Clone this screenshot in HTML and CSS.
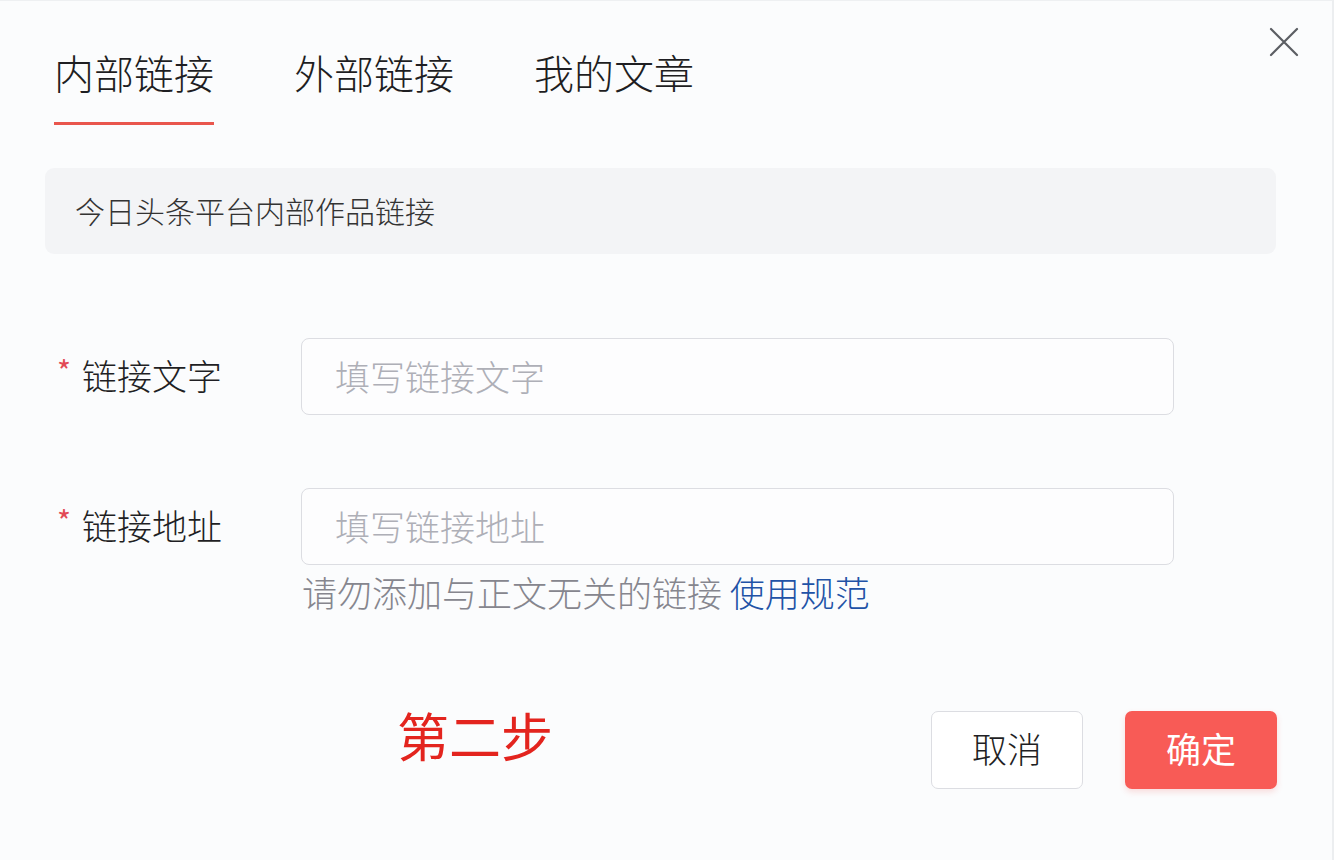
FILE: index.html
```html
<!DOCTYPE html>
<html lang="zh-CN">
<head>
<meta charset="utf-8">
<title>插入链接</title>
<link rel="stylesheet" href="styles.css">
</head>
<body>
<div class="dialog">
  <button class="close" aria-label="关闭">
    <svg width="30" height="30" viewBox="0 0 30 30"><path d="M2 2 L28 28 M28 2 L2 28" stroke="#5b5e63" stroke-width="2.2" stroke-linecap="round" fill="none"/></svg>
  </button>
  <div class="tabs">
    <div class="tab active">内部链接</div>
    <div class="tab">外部链接</div>
    <div class="tab">我的文章</div>
  </div>
  <div class="notice">今日头条平台内部作品链接</div>
  <div class="form">
    <div class="row">
      <label class="label"><span class="req">*</span>链接文字</label>
      <input class="input" type="text" placeholder="填写链接文字">
    </div>
    <div class="row row-2">
      <label class="label"><span class="req">*</span>链接地址</label>
      <input class="input" type="text" placeholder="填写链接地址">
    </div>
    <div class="help">请勿添加与正文无关的链接 <a class="link" href="#">使用规范</a></div>
  </div>
  <div class="footer">
    <div class="step">第二步</div>
    <button class="btn btn-cancel">取消</button>
    <button class="btn btn-ok">确定</button>
  </div>
</div>
</body>
</html>
```

FILE: styles.css
```css
* { box-sizing: border-box; }
html, body { margin: 0; padding: 0; background: #fbfcfd; }
body {
  font-family: "Noto Sans CJK SC", "Noto Sans", "Liberation Sans", sans-serif;
  font-weight: 300;
  color: #222;
}
.dialog {
  position: relative;
  width: 1334px;
  height: 860px;
  background: #fbfcfd;
  border-top: 1px solid #eef0f2;
  border-right: 2px solid #eceef0;
  overflow: hidden;
}
.close {
  position: absolute;
  top: 26px;
  left: 1269px;
  width: 30px;
  height: 30px;
  padding: 0;
  border: 0;
  background: transparent;
  display: flex;
}
.tabs {
  display: flex;
  gap: 80px;
  padding: 48px 0 0 54px;
}
.tab {
  font-size: 40px;
  line-height: 46px;
  color: #1e1e22;
  padding-bottom: 27px;
  border-bottom: 3px solid transparent;
}
.tab.active { border-bottom-color: #e9564d; }
.notice {
  margin: 43px 56px 0 45px;
  height: 86px;
  border-radius: 9px;
  background: #f3f4f6;
  padding: 0 0 3px 30px;
  display: flex;
  align-items: center;
  font-size: 30px;
  color: #333;
}
.form { margin-top: 84px; }
.row {
  display: flex;
  align-items: center;
  height: 77px;
}
.row-2 { margin-top: 73px; }
.label {
  width: 301px;
  padding: 0 0 4px 57px;
  display: flex;
  align-items: center;
  font-size: 35px;
  color: #1f1f24;
}
.req {
  color: #e24a55;
  font-size: 30px;
  font-weight: 400;
  width: 25px;
  margin-bottom: 10px;
}
.input {
  width: 873px;
  height: 77px;
  border: 1.5px solid #dcdde2;
  border-radius: 8px;
  background: #fdfdfe;
  padding: 0 0 3px 33px;
  font-family: inherit;
  font-weight: 300;
  font-size: 35px;
  color: #222;
  outline: none;
}
.input::placeholder { color: #aeafb7; }
.help {
  margin: 5px 0 0 302px;
  font-size: 35px;
  line-height: 44px;
  color: #86868e;
}
.link { color: #2152a6; text-decoration: none; font-weight: 300; }
.footer {
  display: flex;
  align-items: center;
  margin-top: 97px;
  padding: 0 55px 0 397px;
  height: 78px;
}
.step {
  flex: 1;
  font-size: 52px;
  font-weight: 400;
  color: #e3241e;
  line-height: 1;
  margin-top: -30px;
}
.btn {
  width: 152px;
  height: 78px;
  border-radius: 7px;
  font-family: inherit;
  font-weight: 300;
  font-size: 35px;
  padding: 0 0 6px;
}
.btn-cancel {
  background: #ffffff;
  border: 1.5px solid #dcdde2;
  color: #1f1f24;
  margin-right: 42px;
}
.btn-ok {
  background: #f85b56;
  border: 0;
  color: #ffffff;
  font-weight: 400;
  box-shadow: 0 3px 6px rgba(240, 80, 70, 0.18);
}
```
